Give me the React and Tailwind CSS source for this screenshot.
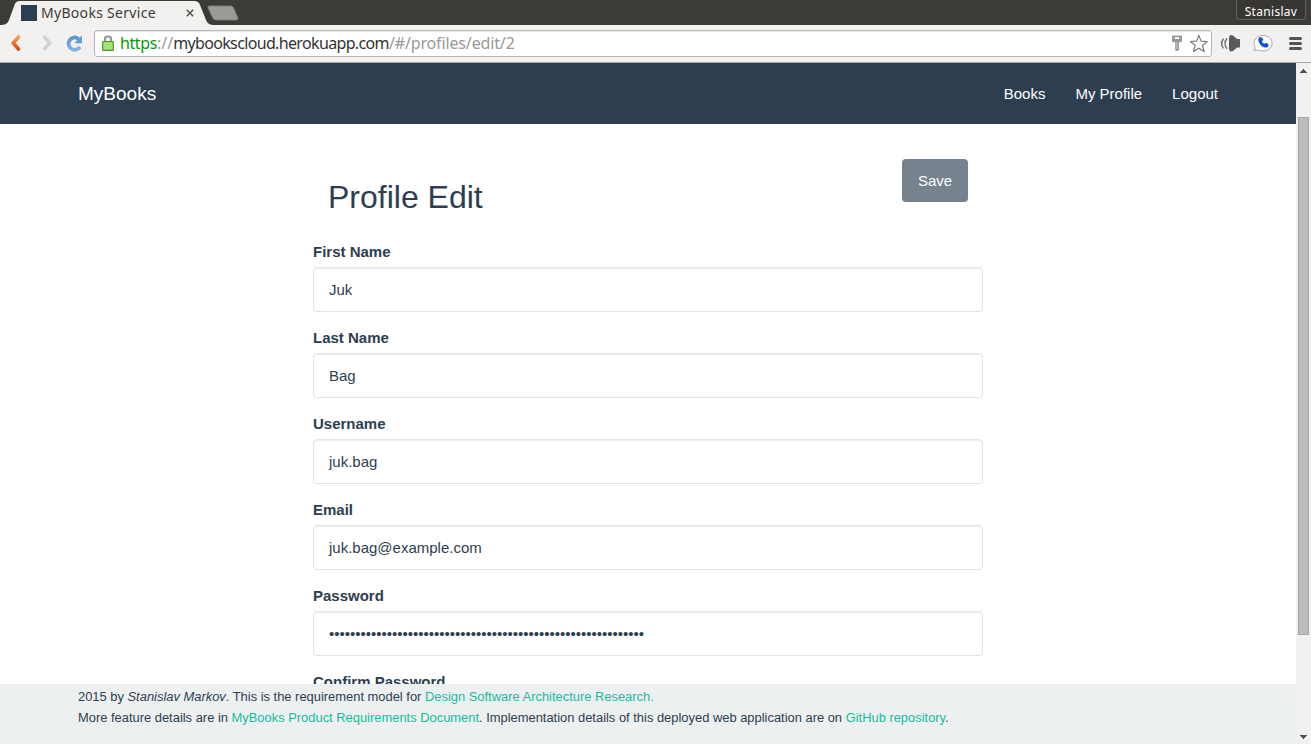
import React from "react";

const FIELDS = [
  { label: "First Name", value: "Juk" },
  { label: "Last Name", value: "Bag" },
  { label: "Username", value: "juk.bag" },
  { label: "Email", value: "juk.bag@example.com" },
  { label: "Password", value: "•".repeat(60) },
  { label: "Confirm Password", value: "" },
];

function TabStrip() {
  return (
    <div className="relative h-[25px] shrink-0 bg-[#3c3b37]">
      <svg className="absolute left-0 top-0" width="250" height="25" viewBox="0 0 250 25">
        <path d="M0 25 C5 25 7.500 24 9 20 L14.500 5 C15.500 2 17 1 20 1 H194 C197 1 199 2 200 5 L206 20 C207.500 24 210 25 215 25 Z" fill="#f2f1f0" />
        <path d="M209.500 6 H230 C232 6 233 6.500 233.700 8.500 L237.700 17.500 C238.300 19.300 237.500 20 236 20 H217 C214.500 20 213.500 19.300 212.700 17.500 L208.200 8 C207.700 6.700 208 6 209.500 6 Z" fill="#9b9a97" stroke="#82817d" strokeWidth="0.800" />
      </svg>
      <div className="relative flex h-full items-center">
        <div className="ml-[21px] h-4 w-4 bg-[#2c3e50]" />
        <span className="ml-1 w-[140px] whitespace-nowrap font-['Noto_Sans',sans-serif] text-[14px] leading-none tracking-[0.300px] text-[#3c3b37]">MyBooks Service</span>
        <svg className="ml-[5px]" width="8" height="8" viewBox="0 0 8 8" stroke="#555450" strokeWidth="1.500">
          <path d="M0.800 0.800 L7.200 7.200 M7.200 0.800 L0.800 7.200" />
        </svg>
        <div className="ml-auto mr-[5px] mb-[5px] flex h-[20px] w-[70px] items-center justify-center rounded-b-[4px] border border-t-0 border-[#65635e] bg-[#373632] pt-[4px] font-['Noto_Sans',sans-serif] text-[12px] leading-none tracking-[0.300px] text-white">Stanislav</div>
      </div>
    </div>
  );
}

function Toolbar() {
  return (
    <div className="flex h-[38px] shrink-0 items-center border-b border-[#a9a8a5] bg-[#f2f1f0]">
      <svg width="94" height="37" viewBox="0 0 94 37" fill="none">
        <defs>
          <linearGradient id="back" x1="0" y1="0" x2="0" y2="1">
            <stop offset="0" stopColor="#f0a060" />
            <stop offset="1" stopColor="#dd4814" />
          </linearGradient>
          <linearGradient id="reload" x1="0" y1="0" x2="0" y2="1">
            <stop offset="0" stopColor="#5f97cf" />
            <stop offset="1" stopColor="#82b3e2" />
          </linearGradient>
        </defs>
        <path d="M18.500 12 L13.200 18 L18.500 24" stroke="url(#back)" strokeWidth="3.600" strokeLinecap="round" strokeLinejoin="round" />
        <path d="M44.500 12 L49.800 18 L44.500 24" stroke="#d3d2d0" strokeWidth="3.400" strokeLinecap="round" strokeLinejoin="round" />
        <path d="M80 22 A6.200 6.200 0 1 1 78.500 13.700" stroke="url(#reload)" strokeWidth="3.800" />
        <path d="M82 10.500 V18.300 H74.300 L77 15.700 L75.800 14.200 L79 13 Z" fill="#659cd3" />
      </svg>
      <div className="flex h-[27px] w-[1118px] items-center rounded-[3px] border border-[#b8b7b4] bg-white shadow-[inset_0_1px_1px_rgba(0,0,0,0.100)]">
        <svg className="ml-[7px] mb-[1px]" width="12" height="16" viewBox="0 0 12 16">
          <path d="M3 7 V4 Q3 1.500 6 1.500 Q9 1.500 9 4 V7" fill="none" stroke="#777" strokeWidth="2.200" />
          <path d="M3 7 V4 Q3 1.700 6 1.700 Q9 1.700 9 4 V7" fill="none" stroke="#ccc" strokeWidth="0.800" />
          <rect x="0.600" y="6.500" width="10.800" height="8.900" rx="0.600" fill="#98dc68" stroke="#55913a" strokeWidth="1.100" />
          <path d="M2 8.300 H10 M2 10.700 H10 M2 13 H10" stroke="#b6ec8b" strokeWidth="1" />
        </svg>
        <div className="mb-[2px] ml-[6px] whitespace-nowrap font-['Noto_Sans',sans-serif] text-[16px] leading-none text-[#333]">
          <span className="tracking-[-0.400px] text-[#0b940b]">https</span><span className="tracking-[0px] text-[#999]">://</span><span className="tracking-[-0.650px]">mybookscloud.herokuapp.com</span><span className="tracking-[-0.140px] text-[#999]">/#/profiles/edit/2</span>
        </div>
        <svg className="ml-auto" width="43" height="25" viewBox="0 0 43 25">
          <path d="M5 4.500 H13 Q14 4.500 14 5.500 V10 Q14 11.200 12.500 11.200 H11 V19 L9.500 20 H8.500 L7.200 19 V11.200 H5.500 Q4 11.200 4 10 V5.500 Q4 4.500 5 4.500 Z M6.800 6.300 V8 H11.200 V6.300 Z" fill="#9a9996" fillRule="evenodd" />
          <path d="M9 11 V18" stroke="#deddda" strokeWidth="0.800" />
          <path d="M30.800 4.200 L33.100 10.100 L39.300 10.500 L34.400 14.400 L36.200 20.500 L30.800 17.200 L25.500 20.500 L27.200 14.400 L22.400 10.500 L28.600 10.100 Z" fill="#fff" stroke="#777" strokeWidth="1.150" strokeLinejoin="round" />
        </svg>
      </div>
      <svg width="99" height="37" viewBox="0 0 99 37">
        <path d="M17 13 L18 10 L21 10.500 L25 14 H28 V22.500 H25 L21 26 L18 26.500 L17 24 Z" fill="#5b5a58" />
        <path d="M15 13.200 Q11 18.500 15 23.700 M11.500 13.800 Q7.500 18.500 11.500 23.200" fill="none" stroke="#777573" strokeWidth="1.500" />
        <path d="M51 10.500 C45.500 10.500 42 14 42 18.500 C42 20.500 42.700 22 43.500 23 L41.800 25.500 L46.500 25 C48 25.800 49.500 26 51 26 C56.500 26 60 22.700 60 18.300 C60 13.800 56.300 10.500 51 10.500 Z" fill="#fff" stroke="#aaa9a7" />
        <path d="M47 12.500 L49.300 12 L51.300 14.800 L49.800 16.500 Q50.700 18.200 52.500 18.800 L54 17.700 L56.800 19.600 L55.700 22 C53.500 23.500 49.200 21.500 47.700 18.700 C46.300 16.300 45.700 14 47 12.500 Z" fill="#0d55d0" />
        <path d="M78.500 13.500 H88.500 M78.500 18.500 H88.500 M78.500 23.500 H88.500" stroke="#555452" strokeWidth="3" strokeLinecap="round" />
      </svg>
    </div>
  );
}

function Scrollbar() {
  return (
    <div className="flex w-[15px] shrink-0 flex-col items-center bg-[#f1f1f1]">
      <svg className="shrink-0" width="15" height="54" viewBox="0 0 15 54" shapeRendering="crispEdges">
        <path d="M4 10 H11 V9 H10 V8 H9 V7 H8 V6 H7 V7 H6 V8 H5 V9 H4 Z" fill="#505050" />
      </svg>
      <div className="h-[518px] w-[11px] shrink-0 border border-[#a6a6a6] bg-[#bcbcbc]" />
      <svg className="mt-auto" width="15" height="15" viewBox="0 0 15 15" shapeRendering="crispEdges">
        <path d="M4 6 H11 V7 H10 V8 H9 V9 H8 V10 H7 V9 H6 V8 H5 V7 H4 Z" fill="#505050" />
      </svg>
    </div>
  );
}

function Field({ label, value }) {
  return (
    <div className="mb-[15px]">
      <div className="mb-[5px] h-[21px] font-bold leading-[21px]">{label}</div>
      <div className="flex h-[45px] items-center rounded-[4px] border border-[#dce4ec] bg-white px-[15px] pt-[2px] shadow-[inset_0_1px_1px_rgba(0,0,0,0.075)]">{value}</div>
    </div>
  );
}

export default function App() {
  return (
    <div className="flex h-[744px] w-[1311px] flex-col overflow-hidden">
      <TabStrip />
      <Toolbar />
      <div className="flex min-h-0 flex-1 font-['Liberation_Sans',sans-serif] text-[15px] text-[#2c3e50]">
        <div className="flex w-[1296px] flex-col bg-white">
          <nav className="flex h-[61px] shrink-0 items-center justify-between bg-[#2c3e50] px-[78px] pt-[2px] text-white">
            <span className="text-[19px]">MyBooks</span>
            <div className="flex gap-[30px]">
              <span>Books</span>
              <span>My Profile</span>
              <span>Logout</span>
            </div>
          </nav>
          <main className="min-h-0 flex-1 overflow-hidden">
            <div className="mx-auto w-[670px]">
              <div className="flex h-[117px] items-start justify-between px-[15px] pt-[35px]">
                <h1 className="mt-[20px] text-[32px] leading-[36px]">Profile Edit</h1>
                <div className="flex h-[43px] w-[66px] items-center justify-center rounded-[4px] bg-[#76828d] pt-[2px] text-white">Save</div>
              </div>
              {FIELDS.map((field) => (
                <Field key={field.label} label={field.label} value={field.value} />
              ))}
            </div>
          </main>
          <footer className="h-[60px] shrink-0 bg-[#ecf0f1] px-[78px] pt-[2px] text-[12.925px] leading-[21px]">
            <p>2015 by <i>Stanislav Markov</i>. This is the requirement model for <span className="text-[#18bc9c]">Design Software Architecture Research.</span></p>
            <p>More feature details are in <span className="text-[#18bc9c]">MyBooks Product Requirements Document</span>. Implementation details of this deployed web application are on <span className="text-[#18bc9c]">GitHub repository</span>.</p>
          </footer>
        </div>
        <Scrollbar />
      </div>
    </div>
  );
}
